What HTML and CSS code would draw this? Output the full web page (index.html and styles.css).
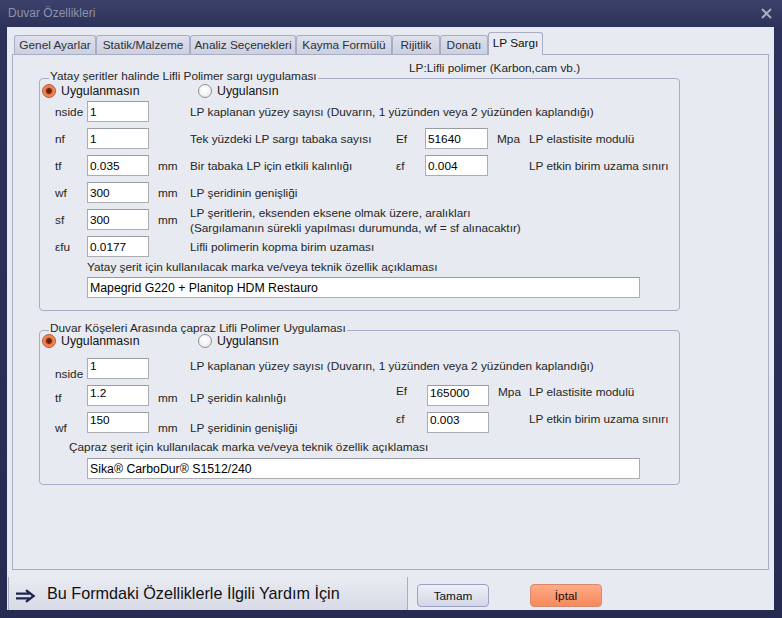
FILE: index.html
```html
<!DOCTYPE html>
<html lang="tr">
<head>
<meta charset="utf-8">
<title>Duvar Özellikleri</title>
<link rel="stylesheet" href="styles.css">
</head>
<body>
<div class="window">
  <div class="titlebar">
    <span class="title">Duvar Özellikleri</span>
    <svg class="close" width="11" height="11" viewBox="0 0 11 11"><path d="M1 1L10 10M10 1L1 10" stroke="#a9adc2" stroke-width="2" fill="none"/></svg>
  </div>
  <div class="client">
    <div class="tabs">
      <div class="tab t-genel">Genel Ayarlar</div>
      <div class="tab t-statik">Statik/Malzeme</div>
      <div class="tab t-analiz">Analiz Seçenekleri</div>
      <div class="tab t-kayma">Kayma Formülü</div>
      <div class="tab t-rijit">Rijitlik</div>
      <div class="tab t-donati">Donatı</div>
      <div class="tab t-lp active">LP Sargı</div>
    </div>
    <div class="panel">
      <div class="note">LP:Lifli polimer (Karbon,cam vb.)</div>

      <div class="group g1">
        <div class="legend">Yatay şeritler halinde Lifli Polimer sargı uygulaması</div>
        <div class="radios">
          <label class="opt first"><span class="radio on"></span>Uygulanmasın</label>
          <label class="opt"><span class="radio"></span>Uygulansın</label>
        </div>
        <div class="grid grid1">
          <span class="lbl">nside</span><input class="tb" value="1" readonly><span class="desc rest">LP kaplanan yüzey sayısı (Duvarın, 1 yüzünden veya 2 yüzünden kaplandığı)</span>

          <span class="lbl">nf</span><input class="tb" value="1" readonly><span></span><span class="desc">Tek yüzdeki LP sargı tabaka sayısı</span><span class="lbl">Ef</span><input class="tb" value="51640" readonly><span class="unit">Mpa</span><span class="desc">LP elastisite modulü</span>

          <span class="lbl">tf</span><input class="tb" value="0.035" readonly><span class="unit">mm</span><span class="desc">Bir tabaka LP için etkili kalınlığı</span><span class="lbl">εf</span><input class="tb" value="0.004" readonly><span></span><span class="desc">LP etkin birim uzama sınırı</span>

          <span class="lbl">wf</span><input class="tb" value="300" readonly><span class="unit">mm</span><span class="desc rest">LP şeridinin genişliği</span>

          <span class="lbl">sf</span><input class="tb" value="300" readonly><span class="unit">mm</span><span class="desc rest two">LP şeritlerin, eksenden eksene olmak üzere, aralıkları<br>(Sargılamanın sürekli yapılması durumunda, wf = sf alınacaktır)</span>

          <span class="lbl">εfu</span><input class="tb" value="0.0177" readonly><span></span><span class="desc rest">Lifli polimerin kopma birim uzaması</span>
        </div>
        <div class="caption">Yatay şerit için kullanılacak marka ve/veya teknik özellik açıklaması</div>
        <input class="tb wide" value="Mapegrid G220 + Planitop HDM Restauro" readonly>
      </div>

      <div class="group g2">
        <div class="legend">Duvar Köşeleri Arasında çapraz Lifli Polimer Uygulaması</div>
        <div class="radios">
          <label class="opt first"><span class="radio on"></span>Uygulanmasın</label>
          <label class="opt"><span class="radio"></span>Uygulansın</label>
        </div>
        <div class="grid grid2">
          <span class="lbl low">nside</span><input class="tb tt" value="1" readonly><span class="desc rest">LP kaplanan yüzey sayısı (Duvarın, 1 yüzünden veya 2 yüzünden kaplandığı)</span>

          <span class="lbl mid">tf</span><input class="tb tt" value="1.2" readonly><span class="unit mid">mm</span><span class="desc mid">LP şeridin kalınlığı</span><span class="lbl nudge2">Ef</span><input class="tb tt raise" value="165000" readonly><span class="unit nudge">Mpa</span><span class="desc nudge">LP elastisite modulü</span>

          <span class="lbl low">wf</span><input class="tb tt" value="150" readonly><span class="unit low">mm</span><span class="desc low">LP şeridinin genişliği</span><span class="lbl nudge">εf</span><input class="tb tt raise" value="0.003" readonly><span></span><span class="desc nudge">LP etkin birim uzama sınırı</span>
        </div>
        <div class="caption">Çapraz şerit için kullanılacak marka ve/veya teknik özellik açıklaması</div>
        <input class="tb wide" value="Sika® CarboDur® S1512/240" readonly>
      </div>
    </div>
    <div class="footer">
      <div class="help">
        <svg class="arrow" width="21" height="14" viewBox="0 0 21 14"><path d="M1 4.6H14.5M1 9.4H14.5M11 1.2L18.6 7L11 12.8" stroke="#1f2550" stroke-width="2.3" fill="none" stroke-linejoin="miter"/></svg>
        <span>Bu Formdaki Özelliklerle İlgili Yardım İçin</span>
      </div>
      <button class="btn ok">Tamam</button>
      <button class="btn cancel">İptal</button>
    </div>
  </div>
</div>
</body>
</html>
```

FILE: styles.css
```css
* { box-sizing: border-box; }
html, body { margin: 0; padding: 0; }
body {
  width: 782px;
  height: 618px;
  overflow: hidden;
  font-family: "Liberation Sans", Arial, sans-serif;
  font-size: 11.8px;
  color: #262626;
  background: #272d52;
}
.window {
  width: 782px;
  height: 618px;
  padding: 0 8px 8px 7px;
  display: flex;
  flex-direction: column;
  background: linear-gradient(#3b416a 0, #2c3259 27px, #262c51 100%);
}
.titlebar {
  height: 27px;
  display: flex;
  align-items: center;
  justify-content: space-between;
  padding: 0 2px 1px 1px;
}
.title { color: #8d93ae; font-size: 12px; }
.close { display: block; }

.client {
  flex: 1;
  background: #e7eaf0;
  display: flex;
  flex-direction: column;
}
.tabs {
  display: flex;
  align-items: flex-end;
  height: 22px;
  margin: 5px 0 0 7px;
  position: relative;
  z-index: 1;
}
.tab {
  height: 19px;
  line-height: 18px;
  padding: 0;
  text-align: center;
  border: 1px solid #a8acc7;
  border-bottom: 0;
  border-radius: 3px 3px 0 0;
  background: linear-gradient(#dee1eb, #ccd0df);
  color: #2e2e3a;
  white-space: nowrap;
}
.t-genel { width: 82px; }
.t-statik { width: 94px; }
.t-analiz { width: 106px; }
.t-kayma { width: 96px; }
.t-rijit { width: 48px; }
.t-donati { width: 48px; }
.t-lp { width: 55px; }
.tab.active {
  height: 23px;
  line-height: 20px;
  margin-bottom: -1px;
  background: #e7eaf0;
  color: #111;
}
.panel {
  margin-left: 5px;
  width: 757px;
  height: 516px;
  border: 1px solid #a8acc7;
}
.note {
  margin-top: 5px;
  padding-left: 396px;
  line-height: 16px;
  height: 16px;
}
.group {
  margin-left: 26px;
  width: 641px;
  border: 1px solid #a8acc7;
  border-radius: 4px;
}
.g1 { margin-top: 2px; padding-bottom: 12px; }
.g2 { margin-top: 19px; padding-bottom: 5px; }
.legend {
  width: fit-content;
  margin: -11px 0 0 9px;
  padding: 0 1px;
  height: 16px;
  line-height: 16px;
  background: #e7eaf0;
}
.radios {
  display: flex;
  align-items: center;
  height: 13px;
  padding-left: 2px;
}
.g2 .radios { margin-top: -2px; }
.opt {
  display: flex;
  align-items: center;
  gap: 5px;
  white-space: nowrap;
  font-size: 12.3px;
  color: #111;
}
.opt.first { width: 156px; }
.radio {
  width: 14px;
  height: 14px;
  border-radius: 50%;
  border: 1px solid #8d9093;
  background: radial-gradient(circle at 45% 40%, #ffffff 0, #f4f4f4 50%, #dcdcdc 100%);
  flex: none;
}
.radio.on {
  border-color: #b9562f;
  background: radial-gradient(circle, #5e2210 0, #7d2c12 2.6px, #e36e40 3.4px, #f08a5d 5px, #e9784a 100%);
}

.grid {
  display: grid;
  margin-left: 15px;
  row-gap: 6px;
  white-space: nowrap;
  line-height: 16px;
}
.grid1 {
  margin-top: 4px;
  grid-template-columns: 32px 62px 41px 206px 29px 63px 41px 1fr;
  grid-template-rows: repeat(6, 21px);
  align-items: center;
}
.grid2 {
  margin-top: 11px;
  grid-template-columns: 32px 62px 41px 206px 31px 62px 40px 1fr;
  grid-template-rows: repeat(3, 21px);
  align-items: start;
}
.unit { padding-left: 9px; }
.rest { grid-column: 4 / -1; }
.two {
  align-self: start;
  margin-top: -3px;
  line-height: 15px;
}
.low { margin-top: 8px; }
.mid { margin-top: 5px; }
.nudge { margin-top: -1px; }
.nudge2 { margin-top: -2px; }
.raise { margin-top: -8px; }

.tb {
  display: block;
  width: 100%;
  height: 21px;
  margin: 0;
  padding: 0 2px;
  border: 1px solid #abadb3;
  border-top-color: #9a9ca5;
  background: #fff;
  font-family: inherit;
  font-size: 11.8px;
  color: #000;
  outline: none;
}
.tt { padding-bottom: 5px; }
.caption {
  line-height: 16px;
  height: 16px;
  white-space: nowrap;
}
.g1 .caption { margin: 2px 0 0 47px; }
.g2 .caption { margin: 6px 0 0 29px; }
.wide {
  width: 553px;
  margin-left: 47px;
  font-size: 12.3px;
}
.g1 .wide { margin-top: 2px; }
.g2 .wide { margin-top: 3px; }

.footer {
  display: flex;
  align-items: flex-start;
  margin-top: 7px;
  height: 33px;
}
.help {
  width: 400px;
  height: 33px;
  margin-left: 1px;
  border-left: 1px solid #a9acc4;
  border-right: 1px solid #a9acc4;
  background: linear-gradient(#e9ebf2, #d8dbe6);
  display: flex;
  align-items: center;
  gap: 11px;
  padding-left: 6px;
  font-size: 16.2px;
  color: #111;
  white-space: nowrap;
}
.arrow { display: block; margin-top: 4px; }
.btn {
  width: 72px;
  height: 23px;
  margin-top: 7px;
  border: 1px solid #9ca1c3;
  border-radius: 4px;
  background: linear-gradient(#eef0f7, #d3d6e6);
  font-family: inherit;
  font-size: 11.8px;
  color: #111;
  padding: 0;
}
.ok { margin-left: 9px; }
.cancel {
  margin-left: 41px;
  border-color: #d68a6b;
  background: linear-gradient(#ffab86, #f5895b);
}
```
